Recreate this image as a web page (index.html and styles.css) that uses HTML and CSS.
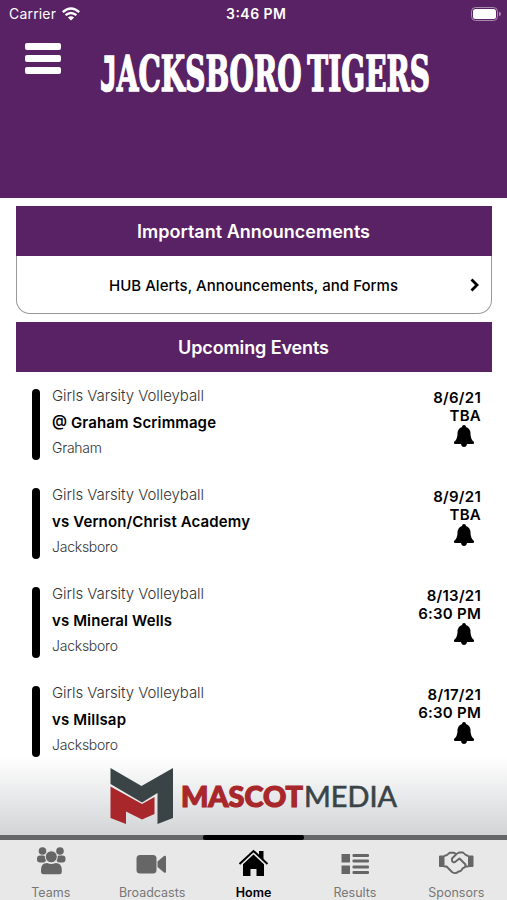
FILE: index.html
```
<!DOCTYPE html>
<html lang="en">
<head>
  <meta charset="UTF-8">
  <meta name="viewport" content="width=device-width, initial-scale=1.0">
  <title>Jacksboro Tigers</title>
  <link rel="stylesheet" href="styles.css">
</head>
<body>
  <div class="app">
    <header class="header">
      <div class="status-bar">
        <div class="carrier">
          <svg class="carrier-name" width="47" height="18"><text x="0" y="14" textLength="47">Carrier</text></svg>
          <svg class="wifi" width="18" height="14" viewBox="0 0 18 14" fill="none" stroke="#fff" stroke-width="2.4">
            <path d="M0.8 5.2 Q9 -2 17.2 5.2"/>
            <path d="M3.6 8.2 Q9 3.6 14.4 8.2"/>
            <path d="M9 13.4 L5.9 10.4 Q9 7.9 12.1 10.4 Z" fill="#fff" stroke="none"/>
          </svg>
        </div>
        <svg class="clock" width="60" height="18"><text x="0" y="14" textLength="60">3:46 PM</text></svg>
        <svg class="battery" width="31" height="14" viewBox="0 0 31 14">
          <rect x="0.5" y="0.5" width="26" height="13" rx="4" fill="none" stroke="#a98bb0"/>
          <rect x="2" y="2" width="23" height="10" rx="2.5" fill="#fff"/>
          <path d="M28 4.8 Q30 5.4 30 7 Q30 8.6 28 9.2 Z" fill="#a98bb0"/>
        </svg>
      </div>
      <div class="title-row">
        <button class="menu" aria-label="Menu"><span></span><span></span><span></span></button>
        <svg class="title" width="336" height="70" viewBox="0 0 336 70">
          <text x="2" y="53" textLength="330" lengthAdjust="spacingAndGlyphs"><tspan class="initial">J</tspan>ACKSBORO TIGERS</text>
        </svg>
      </div>
    </header>

    <main class="content">
      <h2 class="section-title"><svg width="234" height="26"><text x="0" y="20" textLength="233">Important Announcements</text></svg></h2>
      <a class="announcement">
        <svg width="290" height="22"><text x="0" y="16.5" textLength="289">HUB Alerts, Announcements, and Forms</text></svg>
        <svg class="chevron" width="10" height="14" viewBox="0 0 10 14" fill="none" stroke="#000" stroke-width="2.8"><path d="M1.5 1.5 L7 7 L1.5 12.5"/></svg>
      </a>
      <h2 class="section-title"><svg width="152" height="26"><text x="0" y="20" textLength="151">Upcoming Events</text></svg></h2>

      <div class="events">
        <div class="event">
          <span class="bar"></span>
          <div class="info">
            <svg class="team" width="160" height="20"><text x="0" y="15" textLength="152">Girls Varsity Volleyball</text></svg>
            <svg class="opponent" width="220" height="22"><text x="0" y="16.5" textLength="164">@ Graham Scrimmage</text></svg>
            <svg class="place" width="100" height="20"><text x="0" y="15" textLength="50">Graham</text></svg>
          </div>
          <div class="when">
            <span>8/6/21</span><span>TBA</span>
            <svg class="bell"><use href="#bell"/></svg>
          </div>
        </div>
        <div class="event">
          <span class="bar"></span>
          <div class="info">
            <svg class="team" width="160" height="20"><text x="0" y="15" textLength="152">Girls Varsity Volleyball</text></svg>
            <svg class="opponent" width="220" height="22"><text x="0" y="16.5" textLength="198">vs Vernon/Christ Academy</text></svg>
            <svg class="place" width="100" height="20"><text x="0" y="15" textLength="66">Jacksboro</text></svg>
          </div>
          <div class="when">
            <span>8/9/21</span><span>TBA</span>
            <svg class="bell"><use href="#bell"/></svg>
          </div>
        </div>
        <div class="event">
          <span class="bar"></span>
          <div class="info">
            <svg class="team" width="160" height="20"><text x="0" y="15" textLength="152">Girls Varsity Volleyball</text></svg>
            <svg class="opponent" width="220" height="22"><text x="0" y="16.5" textLength="120">vs Mineral Wells</text></svg>
            <svg class="place" width="100" height="20"><text x="0" y="15" textLength="66">Jacksboro</text></svg>
          </div>
          <div class="when">
            <span>8/13/21</span><span>6:30 PM</span>
            <svg class="bell"><use href="#bell"/></svg>
          </div>
        </div>
        <div class="event">
          <span class="bar"></span>
          <div class="info">
            <svg class="team" width="160" height="20"><text x="0" y="15" textLength="152">Girls Varsity Volleyball</text></svg>
            <svg class="opponent" width="220" height="22"><text x="0" y="16.5" textLength="74">vs Millsap</text></svg>
            <svg class="place" width="100" height="20"><text x="0" y="15" textLength="66">Jacksboro</text></svg>
          </div>
          <div class="when">
            <span>8/17/21</span><span>6:30 PM</span>
            <svg class="bell"><use href="#bell"/></svg>
          </div>
        </div>
      </div>
    </main>

    <div class="sponsor">
      <svg width="292" height="60" viewBox="0 0 292 60">
        <path d="M1.5 0 L32.5 18 L64 0 V50 L48.5 56 V25 L33 34.5 L1.5 16 Z" fill="#3a4447"/>
        <path d="M1.5 18.5 L33 36 L45.5 29 V46 L33 51.5 L17 43.5 V56 L1.5 50 Z" fill="#a8272b"/>
        <text class="mascot" x="72" y="39" textLength="122" lengthAdjust="spacingAndGlyphs">MASCOT</text>
        <text class="media" x="195" y="39" textLength="93" lengthAdjust="spacingAndGlyphs">MEDIA</text>
      </svg>
    </div>

    <nav class="tabs">
      <a class="tab">
        <svg width="30" height="30" viewBox="0 0 30 30" fill="#666">
          <circle cx="6.5" cy="5" r="3.8"/><circle cx="24" cy="5" r="3.8"/>
          <rect x="1" y="9.5" width="9" height="7" rx="3"/><rect x="20.500" y="9.5" width="9" height="7" rx="3"/>
          <circle cx="15.3" cy="10.8" r="6" stroke="#e8e8e8"/>
          <path d="M5 24 Q5 17 11 17 Q15.3 19 19.6 17 Q25.8 17 25.8 24 V26 Q25.8 28.2 23.5 28.2 H7.5 Q5 28.2 5 26 Z"/>
        </svg>
        <span>Teams</span>
      </a>
      <a class="tab">
        <svg width="32" height="30" viewBox="0 0 32 30" fill="#666">
          <rect x="0.5" y="9" width="20" height="18.5" rx="3.5"/>
          <path d="M21.5 15.5 L28 10 Q30 9 30 11 V25.5 Q30 27.5 28 26.5 L21.5 21 Z"/>
        </svg>
        <span>Broadcasts</span>
      </a>
      <a class="tab active">
        <svg width="32" height="30" viewBox="0 0 32 30">
          <path d="M2.5 18 L16.500 5 L30.500 18" fill="none" stroke="#000" stroke-width="2"/>
          <path d="M22 5 H26.500 V14 L22 10 Z"/>
          <path d="M16.500 8.5 L27 18.2 V31.500 H19.500 V23 H13.500 V31.500 H6 V18.2 Z"/>
        </svg>
        <span>Home</span>
      </a>
      <a class="tab">
        <svg width="30" height="30" viewBox="0 0 30 30" fill="#666">
          <rect x="1.5" y="8" width="8.5" height="8.5"/><rect x="1.5" y="19.500" width="8.5" height="8.5"/>
          <rect x="12.5" y="8" width="16.5" height="3" rx="1"/><rect x="12.5" y="13.5" width="16.5" height="3" rx="1"/>
          <rect x="12.5" y="19.500" width="16.5" height="3" rx="1"/><rect x="12.5" y="25" width="16.5" height="3" rx="1"/>
        </svg>
        <span>Results</span>
      </a>
      <a class="tab">
        <svg width="36" height="30" viewBox="0 0 36 30" fill="none" stroke="#666" stroke-width="1.9" stroke-linejoin="round">
          <path d="M1.500 10 H6 V20.5 H1.500 Z M30.500 10 H35 V20.5 H30.500 Z" fill="#666" stroke-width="1"/>
          <path d="M6 10 Q9 9.500 11.500 6.8 H16 L18.5 8 L21 6.500 H25 Q27.500 9.500 30.500 10"/>
          <path d="M18.5 8 L14 12.500 Q13.500 17 17 16 L21.500 12.500 L27.500 18.500 Q28 21.500 24.500 22.500 Q23.500 25.500 20.500 25.500 Q17.500 28.500 14 26 L8.500 20.500 H6 M27.500 20.500 H30.500"/>
        </svg>
        <span>Sponsors</span>
      </a>
    </nav>
  </div>

  <svg class="symbols" width="0" height="0">
    <symbol id="bell" viewBox="0 0 22 24">
      <path d="M11 1 Q13 1 13 3 Q17.5 4.5 17.5 10 Q17.5 15 21 18 Q21.5 20 20 20 H2 Q0.5 20 1 18 Q4.5 15 4.5 10 Q4.5 4.5 9 3 Q9 1 11 1 Z M8 20 H14 Q13.5 23 11 23 Q8.5 23 8 20 Z"/>
    </symbol>
  </svg>
</body>
</html>
```
FILE: styles.css
```
* {
  box-sizing: border-box;
}
body {
  margin: 0;
  font-family: Inter, "Liberation Sans", sans-serif;
  background: #fff;
  color: #000;
}
svg {
  display: block;
  flex-shrink: 0;
}
.app {
  width: 507px;
  height: 900px;
  display: flex;
  flex-direction: column;
  overflow: hidden;
}
.header {
  height: 198px;
  flex-shrink: 0;
  background: #592264;
  color: #fff;
}
.header text {
  fill: #fff;
}
.status-bar {
  height: 28px;
  padding: 0 5px 0 9px;
  display: grid;
  grid-template-columns: 1fr auto 1fr;
  align-items: center;
}
.carrier {
  display: flex;
  gap: 6px;
  align-items: center;
}
.carrier-name {
  font-size: 14px;
}
.clock {
  font-size: 14px;
  font-weight: 600;
}
.battery {
  justify-self: end;
}
.title-row {
  display: flex;
  padding: 10px 0 0 25px;
}
.menu {
  width: 36px;
  height: 31px;
  margin-top: 5px;
  padding: 0;
  border: 0;
  background: none;
  display: flex;
  flex-direction: column;
  justify-content: space-between;
}
.menu span {
  width: 36px;
  height: 7px;
  border-radius: 2px;
  background: #fff;
}
.title {
  margin-left: 37px;
  font-family: "DejaVu Serif", serif;
  font-size: 48px;
  font-weight: bold;
  word-spacing: -7px;
}
.title text {
  stroke: #fff;
  stroke-width: 1.6px;
}
.title .initial {
  font-family: "DejaVu Sans Mono", monospace;
}
.content {
  height: 559px;
  flex-shrink: 0;
  padding: 8px 15px 0 16px;
  overflow: hidden;
}
.section-title {
  height: 50px;
  margin: 0;
  display: flex;
  align-items: center;
  justify-content: center;
  background: #592264;
  font-size: 18px;
  font-weight: 600;
}
.section-title text {
  fill: #fff;
}
.announcement {
  height: 58px;
  margin-bottom: 8px;
  padding: 0 11px 0 92px;
  display: flex;
  align-items: center;
  justify-content: space-between;
  border: 1px solid #999;
  border-top: 0;
  border-radius: 0 0 14px 14px;
  font-size: 15px;
  font-weight: 500;
}
.events {
  padding: 17px 11px 0 16px;
}
.event {
  height: 71px;
  margin-bottom: 28px;
  display: flex;
}
.bar {
  width: 8px;
  border-radius: 4px;
  background: #000;
}
.info {
  flex: 1;
  padding-left: 12px;
}
.info text {
  fill: #333;
}
.info .opponent text {
  fill: #000;
}
.team {
  margin-top: -3px;
  font-size: 15px;
  font-weight: 300;
}
.opponent {
  margin-top: 5px;
  font-size: 15px;
  font-weight: 600;
}
.place {
  margin-top: 5px;
  font-size: 14px;
  font-weight: 300;
}
.when {
  display: flex;
  flex-direction: column;
  align-items: flex-end;
  font-size: 15px;
  line-height: 18px;
  font-weight: 600;
  letter-spacing: 0.25px;
}
.bell {
  width: 22px;
  height: 24px;
  margin: -1px 6px 0 0;
}
.sponsor {
  height: 78px;
  flex-shrink: 0;
  padding: 11px 0 0 109px;
  background: linear-gradient(#fff, #d2d4d6);
}
.sponsor text {
  font-family: Lato, sans-serif;
  font-size: 28px;
}
.sponsor .mascot {
  font-weight: 900;
  fill: #a8272b;
  stroke: #a8272b;
  stroke-width: 1.2px;
}
.sponsor .media {
  fill: #3a4447;
  stroke: #3a4447;
  stroke-width: 0.6px;
}
.tabs {
  height: 65px;
  display: grid;
  grid-template-columns: repeat(5, 1fr);
  background: linear-gradient(#666 5px, #e8e8e8 5px);
}
.tab {
  display: flex;
  flex-direction: column;
  align-items: center;
  font-size: 12.5px;
  color: #777;
}
.tab::before {
  content: "";
  width: 100%;
  height: 5px;
  margin-bottom: 6px;
  border-radius: 2px;
}
.tab span {
  margin-top: 9px;
  line-height: 16px;
}
.tab.active {
  color: #000;
  font-weight: 600;
}
.tab.active::before {
  background: #000;
}
.symbols {
  position: absolute;
}
```
